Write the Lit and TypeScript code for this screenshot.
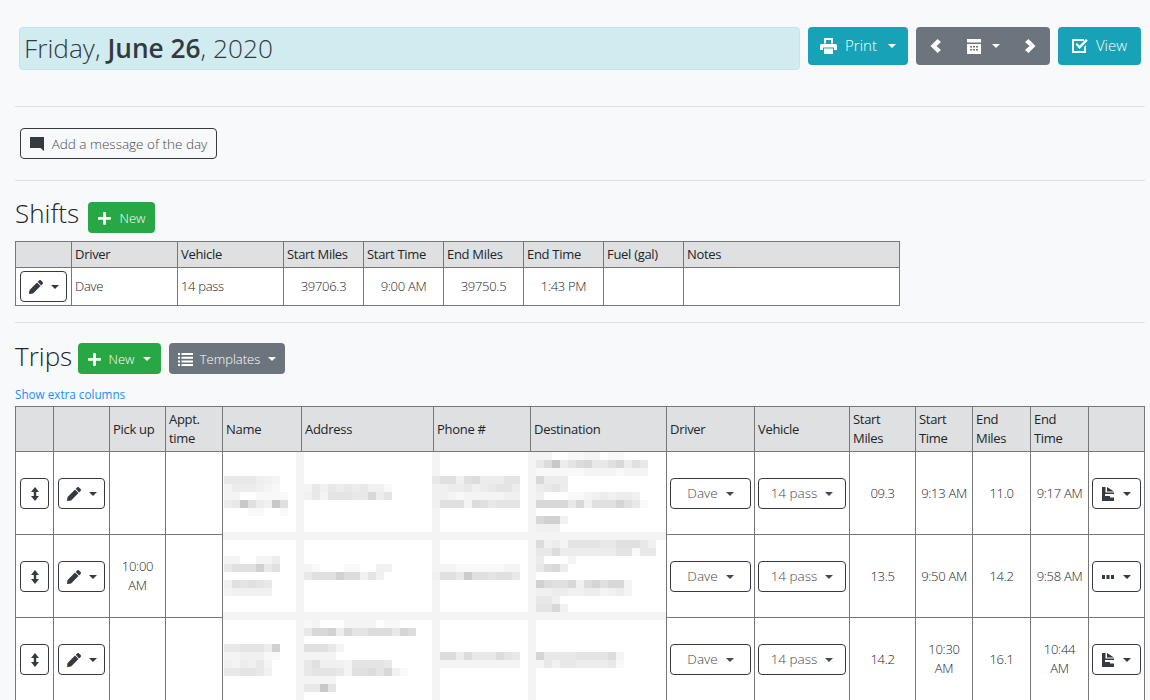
import { LitElement, html, css, svg, nothing } from "lit";
import { customElement } from "lit/decorators.js";

const icons: Record<string, any> = {
  plus: html`<svg viewBox="0 0 448 512"><path d="M416 208H272V64c0-17.67-14.33-32-32-32h-32c-17.67 0-32 14.33-32 32v144H32c-17.67 0-32 14.33-32 32v32c0 17.67 14.33 32 32 32h144v144c0 17.67 14.33 32 32 32h32c17.67 0 32-14.33 32-32V304h144c17.67 0 32-14.33 32-32v-32c0-17.67-14.33-32-32-32z"/></svg>`,
  pencil: html`<svg viewBox="0 0 512 512"><path d="M497.9 142.1l-46.1 46.1c-4.7 4.7-12.3 4.7-17 0l-111-111c-4.7-4.7-4.7-12.3 0-17l46.1-46.1c18.7-18.7 49.1-18.7 67.9 0l60.1 60.1c18.8 18.7 18.8 49.1 0 67.9zM284.2 99.8L21.6 362.4.4 483.9c-2.9 16.4 11.4 30.6 27.8 27.8l121.5-21.3 262.6-262.6c4.7-4.7 4.7-12.3 0-17l-111-111c-4.8-4.7-12.4-4.7-17.1 0z"/></svg>`,
  left: html`<svg viewBox="0 0 11 14"><path d="M7.500 0 11 3 6.500 7 11 11 7.500 14 .5 7z"/></svg>`,
  right: html`<svg viewBox="0 0 11 14"><path d="M3.500 0 0 3 4.500 7 0 11 3.500 14 10.500 7z"/></svg>`,
  print: html`<svg viewBox="0 0 17 16"><path fill-rule="evenodd" d="M4 0h9v5.500H11V2H6v3.500H4zM1.500 6h14A1.500 1.500 0 0 1 17 7.500V12h-3V9.500H3V12H0V7.500A1.500 1.500 0 0 1 1.500 6zM4 10.500h9V16H4z"/></svg>`,
  calendar: html`<svg viewBox="0 0 14 15"><path fill-rule="evenodd" d="M0 0h14v3.500H0zM0 5h14v10H0zM3 7v1.500h2V7zM6 7v1.500h2V7zM9 7v1.500h2V7zM3 10v1.500h2V10zM6 10v1.500h2V10zM9 10v1.500h2V10z"/></svg>`,
  check: html`<svg viewBox="0 0 16 16"><path d="M0 1h12v2H2v10h10v-4l2-2v8H0z"/><path d="M3.500 6.500 5 5l2.500 2.500L14 1l1.800 1.500-8.300 8.500z"/></svg>`,
  comment: html`<svg viewBox="0 0 14 14"><path d="M0 0h14v14l-3.500-3H0z"/></svg>`,
  list: html`<svg viewBox="0 0 15 13"><path d="M0 0h2v2H0zM3.500 0H15v2H3.500zM0 3.700h2v2H0zM3.500 3.700H15v2H3.500zM0 7.400h2v2H0zM3.500 7.400H15v2H3.500zM0 11h2v2H0zM3.500 11H15v2H3.500z"/></svg>`,
  updown: html`<svg viewBox="0 0 8 14"><path d="M4 0l4 5H5.200v4H8l-4 5-4-5h2.800V5H0z"/></svg>`,
  file: html`<svg viewBox="0 0 12 14"><path d="M0 0h3.500v5.500H12V7H3v2h5v1.500h4V14H0zM5 0l7 4.500H5z"/></svg>`,
  dots: html`<svg viewBox="0 0 12 4"><path d="M0 0h3v4H0zM4.500 0h3v4h-3zM9 0h3v4H9z"/></svg>`,
};

// pixelated redaction from the reference: [row, col, two-digit grey values], ".." = no cell
const mosaic: [number, number, string][] = [
  [3, 0, "e8e8e8e8eef0f4"], [4, 0, "f4ecececf0f4f8"], [5, 0, "f4f4....f8f8f8f8"], [6, 0, "ece8c8e0ecf0c8e0"], [7, 3, "f8f8....f8"],
  [13, 0, "f4f4....f4f4ec"], [14, 0, "e8e0e0e0d0e8e0"], [16, 0, "f0e0e4e0e4e8"], [17, 0, "f4f0f0f0f0f0"],
  [24, 0, "e8e8e4e4e4ecd0"], [25, 0, "f4f4f0f0f0f8f8"], [26, 0, "f0f4ecf0e8f4"], [27, 0, "e8e8e4e4e8f0"],
  [4, 10, "f4e8f0e8ece8ece8f0f0f8"], [5, 10, "f0e8f4e4e4e4e8e8d8ece4"],
  [14, 10, "f4f8......f8f8....f0f0"], [15, 10, "e8e0e0e0d0dcdcf0e4f0"],
  [21, 10, "f8f4......f4f4f4f4..f8f8"], [22, 10, "e8d8d8d0ecd8e4e4dcdcdce8d4dc"], [24, 10, "e0e0e0e8f4"], [25, 10, "f4f4f4f4"],
  [26, 10, "e8e0f0f0f0f4e4e4e4e4e8"], [27, 10, "e8e4e4e4e8f4e0e0dce4d8f0f8"], [28, 10, "f4f4f4f4"], [29, 10, "e8e8c8e4"],
  [3, 26, "e8e0e0f0e0dcececece4e4"], [4, 26, "f0f0ecece8f0ece8e4e4ec"], [5, 26, "f0f0f4f8f4f4f4f4f4f0f0"], [6, 26, "f0e0e0e0f4dce0e8e4e4e4"],
  [14, 26, "f4f4f4f8f8f8f8f8f8f4f4"], [15, 26, "f0e0e0e8cce0e0e4e0e0e8"],
  [25, 27, "dcdcecdce8e8e8dce4e8"], [26, 27, "f4f4f4f4f4f4f4f4f4f4"],
  [0, 39, "f4f4....f8f8f4f4..f8f8"], [1, 39, "e8dcc8ece4dcd8e8e8e0d8ece0e8"], [2, 39, "f8f8f8f8f8f8f4f4f4f4f8f4f4f4"], [3, 39, "d8ececec"], [4, 39, "ece8e4ec"],
  [5, 39, "f0......f8f8f4f0ecf0ececf0"], [6, 39, "d8d8d8d8e8d8f0e0e0e0d4e0e8f8"], [8, 39, "d8d0d0f0"], [9, 39, "f0f0f0"],
  [11, 39, "dcf0ecf4e4e4e4e4e8e8e0e0e0e8f0"], [12, 39, "e8e8dcececececececece4e4f8e8e8"], [13, 39, "ec......f4"], [14, 39, "e8dcd8ec"],
  [16, 39, "d0dce0e0d8f0dcd4e0d8d8f4"], [17, 39, "f0f0ececf0f0ececf4f0ecf4"], [18, 39, "e8e8f0"], [19, 39, "e4e4d8f0"],
  [25, 39, "d4e8e8e8e8e4e4e4e4dcf4"], [26, 39, "f4e8f0e8e8ecececece8f8"],
];

const mosaicCells = mosaic.flatMap(([row, col, values]) =>
  (values.match(/../g) ?? []).map((v, i) =>
    v === ".." ? nothing : svg`<rect x=${1 + (col + i) * 8} y=${row * 8} width="8" height="8" fill=${"#" + v + v + v} />`
  )
);

const shiftCols = [56, 106, 106, 80, 80, 80, 80, 80, 216];
const tripCols = [38, 56, 56, 57, 79, 132, 97, 136, 88, 95, 66, 57, 58, 58, 56];

@customElement("app-root")
export class AppRoot extends LitElement {
  static styles = css`
    :host {
      display: block;
      height: 100vh;
      overflow: hidden;
      box-sizing: border-box;
      padding: 27px 5px 0 15px;
      background: #f8f9fa;
      color: #212529;
      font-family: "Open Sans", "Noto Sans", sans-serif;
      font-size: 13px;
      line-height: 19px;
    }
    svg { display: block; fill: currentColor; }
    .top { display: flex; align-items: flex-start; gap: 8px; padding: 0 4px; }
    .date {
      flex: 1;
      height: 43px;
      box-sizing: border-box;
      padding-left: 4px;
      border: 1px solid #bee5eb;
      border-radius: 4px;
      background: #d1ecf1;
      color: #343a40;
      font-size: 26.25px;
      font-weight: 300;
      line-height: 41px;
    }
    .date b { font-weight: 600; }
    hr { height: 1px; border: 0; margin: 0; background: #dfe0e1; }
    .btn {
      display: inline-flex;
      align-items: center;
      justify-content: center;
      box-sizing: border-box;
      height: 31px;
      padding-top: 1px;
      border: 1px solid transparent;
      border-radius: 4px;
      font-size: 13px;
      font-weight: 300;
      white-space: nowrap;
    }
    .lg { height: 38px; padding: 0 0 1px; font-size: 15px; }
    .info { background: #17a2b8; color: #fff; }
    .grey { background: #6c757d; color: #fff; }
    .green { background: #28a745; color: #fff; }
    .outline { border-color: #343a40; color: #454a50; background: transparent; font-size: 13.5px; }
    .caret {
      width: 0;
      height: 0;
      border-top: 4px solid currentColor;
      border-left: 4px solid transparent;
      border-right: 4px solid transparent;
    }
    .message { width: 197px; gap: 8px; margin: 21px 0 21px 5px; }
    .message svg { width: 14px; color: #343a40; }
    .title { display: flex; align-items: center; gap: 8px; }
    h3 { margin: -4px 0 0; font-size: 26px; font-weight: 300; line-height: 31px; color: #212529; }
    .t-shifts h3 { width: 65px; margin-top: -8px; }
    .t-trips h3 { width: 55px; }
    table { border-collapse: separate; border-spacing: 0; table-layout: fixed; border-top: 1px solid #777; border-left: 1px solid #777; background: #fff; }
    th, td { box-sizing: border-box; border-right: 1px solid #777; border-bottom: 1px solid #777; padding: 3px; }
    th { background: #dee0e2; font-weight: 400; text-align: left; color: #212529; letter-spacing: -0.3px; }
    td { font-weight: 300; color: #212529; text-align: center; letter-spacing: -0.3px; }
    td.l { text-align: left; }
    td .btn { display: flex; margin: 0 auto; letter-spacing: 0; }
    .shifts { margin-top: 8px; }
    .shifts tbody td { height: 38px; }
    .trip-table { position: relative; }
    .trips tbody td { height: 83px; }
    .mosaic { position: absolute; left: 208px; top: 46px; background: #fff; }
    .link { display: block; margin-top: 11px; margin-bottom: 2px; font-size: 11.7px; color: #1a8cff; }
    .b-up { width: 29px; margin-left: 1px !important; color: #343a40; }
    .b-up svg { width: 8px; }
    .b-edit { width: 47px; gap: 8px; color: #343a40; }
    .b-edit svg { width: 14px; }
    .b-act { width: 49px; gap: 9px; color: #343a40; }
    .b-act svg { width: 12px; }
    .b-select { gap: 8px; }
  `;

  private caret() {
    return html`<span class="caret"></span>`;
  }

  private tripRow(pick: string, miles1: string, start: string, miles2: string, end: string, act: string) {
    return html`<tr>
      <td><span class="btn outline b-up">${icons.updown}</span></td>
      <td><span class="btn outline b-edit">${icons.pencil}${this.caret()}</span></td>
      <td>${pick}</td>
      <td></td>
      <td></td><td></td><td></td><td></td>
      <td><span class="btn outline b-select" style="width:81px">Dave ${this.caret()}</span></td>
      <td><span class="btn outline b-select" style="width:88px">14 pass ${this.caret()}</span></td>
      <td>${miles1}</td><td>${start}</td><td>${miles2}</td><td>${end}</td>
      <td><span class="btn outline b-act">${icons[act]}${this.caret()}</span></td>
    </tr>`;
  }

  render() {
    return html`
      <div class="top">
        <div class="date">Friday, <b>June 26</b>, 2020</div>
        <span class="btn lg info" style="width:100px;gap:8px"><span style="width:17px">${icons.print}</span>Print<span class="caret" style="margin-left:3px"></span></span>
        <span class="btn lg grey" style="width:134px;gap:0;justify-content:space-between;padding:0 13px">
          <span style="width:11px">${icons.left}</span>
          <span style="display:flex;align-items:center;gap:11px"><span style="width:14px">${icons.calendar}</span>${this.caret()}</span>
          <span style="width:11px">${icons.right}</span>
        </span>
        <span class="btn lg info" style="width:83px;gap:8px"><span style="width:16px">${icons.check}</span>View</span>
      </div>
      <hr style="margin-top:36px" />
      <span class="btn outline message">${icons.comment}Add a message of the day</span>
      <hr />
      <div class="title t-shifts" style="margin-top:21px">
        <h3>Shifts</h3>
        <span class="btn green" style="width:67px;gap:9px"><span style="width:13px">${icons.plus}</span>New</span>
      </div>
      <table class="shifts" style="width:885px">
        <colgroup>${shiftCols.map((w) => html`<col style="width:${w}px" />`)}</colgroup>
        <thead><tr><th></th><th>Driver</th><th>Vehicle</th><th>Start Miles</th><th>Start Time</th><th>End Miles</th><th>End Time</th><th>Fuel (gal)</th><th>Notes</th></tr></thead>
        <tbody><tr>
          <td><span class="btn outline b-edit">${icons.pencil}${this.caret()}</span></td>
          <td class="l">Dave</td><td class="l">14 pass</td><td>39706.3</td><td>9:00 AM</td><td>39750.5</td><td>1:43 PM</td><td></td><td></td>
        </tr></tbody>
      </table>
      <hr style="margin-top:16px" />
      <div class="title t-trips" style="margin-top:20px">
        <h3>Trips</h3>
        <span class="btn green" style="width:83px;gap:8px"><span style="width:13px">${icons.plus}</span>New<span class="caret" style="margin-left:1px"></span></span>
        <span class="btn grey" style="width:116px;gap:7px"><span style="width:15px">${icons.list}</span>Templates<span class="caret" style="margin-left:1px"></span></span>
      </div>
      <span class="link">Show extra columns</span>
      <div class="trip-table">
        <table class="trips" style="width:1130px">
          <colgroup>${tripCols.map((w) => html`<col style="width:${w}px" />`)}</colgroup>
          <thead><tr><th></th><th></th><th>Pick up</th><th>Appt. time</th><th>Name</th><th>Address</th><th>Phone #</th><th>Destination</th><th>Driver</th><th>Vehicle</th><th>Start Miles</th><th>Start Time</th><th>End Miles</th><th>End Time</th><th></th></tr></thead>
          <tbody>
            ${this.tripRow("", "09.3", "9:13 AM", "11.0", "9:17 AM", "file")}
            ${this.tripRow("10:00 AM", "13.5", "9:50 AM", "14.2", "9:58 AM", "dots")}
            ${this.tripRow("", "14.2", "10:30 AM", "16.1", "10:44 AM", "file")}
          </tbody>
        </table>
        <svg class="mosaic" width="443" height="248" viewBox="0 0 443 248">
          <rect x="73" y="0" width="8" height="248" fill="#f4f4f4" />
          <rect x="209" y="0" width="8" height="248" fill="#f4f4f4" />
          <rect x="305" y="0" width="8" height="248" fill="#f4f4f4" />
          <rect x="0" y="80" width="443" height="8" fill="#f4f4f4" />
          <rect x="0" y="160" width="443" height="8" fill="#f4f4f4" />
          ${mosaicCells}
        </svg>
      </div>
    `;
  }
}
